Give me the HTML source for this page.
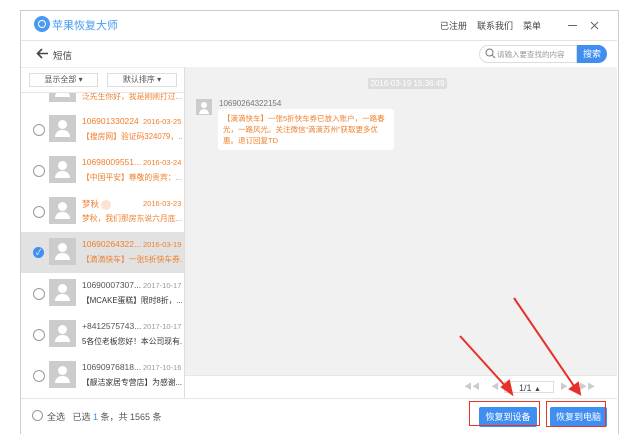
<!DOCTYPE html><html><head><meta charset="utf-8"><style>
body{margin:0;width:644px;height:434px;background:#fff;font-family:"Liberation Sans","Noto Sans CJK SC",sans-serif;position:relative;overflow:hidden}
.a{position:absolute}
.win{left:20px;top:10px;width:597px;height:423px;border:1px solid #ccc;border-bottom:none}
.row{left:21px;width:163px;height:41px}
.av{left:28px;top:6px;width:27px;height:27px;background:#ccc;overflow:hidden}
.av::before{content:"";position:absolute;left:9px;top:5px;width:9px;height:9px;border-radius:50%;background:#fff}
.av::after{content:"";position:absolute;left:6px;top:15px;width:15px;height:7px;border-radius:7px 7px 0 0;background:#fff}
.rd{left:12px;top:15px;width:10px;height:10px;border:1px solid #999;border-radius:50%}
.t1{left:61px;top:7px;font-size:8.5px;color:#555;white-space:nowrap}
.d{left:122px;top:8px;font-size:7.5px;color:#999;white-space:nowrap}
.t2{left:61px;top:22px;font-size:7.8px;color:#333;white-space:nowrap;width:100px;overflow:hidden}
.o{color:#f07f2c!important}
.btn{background:#3f8ef0;color:#fff;font-size:9px;text-align:center;line-height:20px;border-radius:2px}
</style></head><body>
<div class="a win"></div>
<div class="a" style="left:34px;top:16px;width:16px;height:16px;border-radius:50%;background:#4a9af0"></div>
<div class="a" style="left:38px;top:20px;width:6px;height:6px;border:1px solid #fff;border-radius:50%"></div>
<div class="a" style="left:52px;top:17px;font-size:11px;color:#4a9af0">苹果恢复大师</div>
<div class="a" style="left:440px;top:19px;font-size:9px;color:#444">已注册</div>
<div class="a" style="left:477px;top:19px;font-size:9px;color:#444">联系我们</div>
<div class="a" style="left:523px;top:19px;font-size:9px;color:#444">菜单</div>
<div class="a" style="left:568px;top:25px;width:9px;height:1px;background:#666"></div>
<svg class="a" style="left:590px;top:21px" width="9" height="9"><path d="M1 1L8 8M8 1L1 8" stroke="#666" stroke-width="1"/></svg>
<div class="a" style="left:21px;top:40px;width:596px;height:1px;background:#e4e4e4"></div>
<svg class="a" style="left:36px;top:48px" width="13" height="11"><path d="M12 5.5H2M6 1L1.5 5.5L6 10" stroke="#444" stroke-width="1.6" fill="none"/></svg>
<div class="a" style="left:53px;top:48px;font-size:9.5px;color:#444">短信</div>
<div class="a" style="left:479px;top:45px;width:96px;height:16px;border:1px solid #ddd;border-radius:9px 0 0 9px"></div>
<svg class="a" style="left:485px;top:48px" width="11" height="11"><circle cx="4.5" cy="4.5" r="3.5" stroke="#777" fill="none"/><path d="M7 7L10 10" stroke="#777"/></svg>
<div class="a" style="left:497px;top:49px;font-size:7.5px;color:#999">请输入要查找的内容</div>
<div class="a btn" style="left:577px;top:45px;width:30px;height:18px;line-height:18px;border-radius:0 9px 9px 0">搜索</div>
<div class="a" style="left:21px;top:67px;width:596px;height:1px;background:#eee"></div>
<div class="a" style="left:184px;top:67px;width:433px;height:308px;background:#f1f1f1"></div>
<div class="a" style="left:184px;top:67px;width:1px;height:331px;background:#ddd"></div>
<div class="a" style="left:29px;top:73px;width:67px;height:12px;border:1px solid #ddd;font-size:8px;color:#555;text-align:center;line-height:12px">显示全部 ▾</div>
<div class="a" style="left:107px;top:73px;width:68px;height:12px;border:1px solid #ddd;font-size:8px;color:#555;text-align:center;line-height:12px">默认排序 ▾</div>
<div class="a" style="left:21px;top:92px;width:163px;height:1px;background:#e6e6e6"></div>
<div class="a" style="left:21px;top:93px;width:163px;height:305px;overflow:hidden">
 <div class="a row" style="left:0;top:-24px"><div class="a av"></div><div class="a t2 o">泛先生你好，我是刚刚打过...</div></div>
 <div class="a row" style="left:0;top:16px"><div class="a rd"></div><div class="a av"></div><div class="a t1 o">106901330224</div><div class="a d o">2016-03-25</div><div class="a t2 o">【搜房网】验证码324079，...</div></div>
 <div class="a row" style="left:0;top:57px"><div class="a rd"></div><div class="a av"></div><div class="a t1 o">10698009551...</div><div class="a d o">2016-03-24</div><div class="a t2 o">【中国平安】尊敬的贵宾：...</div></div>
 <div class="a row" style="left:0;top:98px"><div class="a rd"></div><div class="a av"></div><div class="a t1 o">梦秋 <span style="display:inline-block;width:10px;height:10px;border-radius:50%;background:#fde3d4;vertical-align:middle"></span></div><div class="a d o">2016-03-23</div><div class="a t2 o">梦秋，我们那房东说六月底...</div></div>
 <div class="a row" style="left:0;top:139px;background:#e2e2e2"><div class="a" style="left:12px;top:15px;width:11px;height:11px;border-radius:50%;background:#3f8ef0;color:#fff;font-size:8px;text-align:center;line-height:11px">✓</div><div class="a av"></div><div class="a t1 o">10690264322...</div><div class="a d o">2016-03-19</div><div class="a t2 o">【滴滴快车】一张5折快车券...</div></div>
 <div class="a row" style="left:0;top:180px"><div class="a rd"></div><div class="a av"></div><div class="a t1">10690007307...</div><div class="a d">2017-10-17</div><div class="a t2">【MCAKE蛋糕】限时8折，...</div></div>
 <div class="a row" style="left:0;top:221px"><div class="a rd"></div><div class="a av"></div><div class="a t1">+8412575743...</div><div class="a d">2017-10-17</div><div class="a t2">5各位老板您好！本公司现有...</div></div>
 <div class="a row" style="left:0;top:262px"><div class="a rd"></div><div class="a av"></div><div class="a t1">10690976818...</div><div class="a d">2017-10-16</div><div class="a t2">【靓洁家居专营店】为感谢...</div></div>
</div>
<div class="a" style="left:368px;top:78px;width:79px;height:11px;background:#ddd;border-radius:2px;font-size:8px;color:#fff;text-align:center;line-height:11px">2016-03-19 15:36:49</div>
<div class="a" style="left:196px;top:99px;width:16px;height:16px;background:#ccc;overflow:hidden"><div class="a" style="left:5px;top:3px;width:6px;height:6px;border-radius:50%;background:#fff"></div><div class="a" style="left:3px;top:10px;width:10px;height:5px;border-radius:5px 5px 0 0;background:#fff"></div></div>
<div class="a" style="left:219px;top:99px;font-size:8px;color:#777">10690264322154</div>
<div class="a" style="left:218px;top:109px;width:166px;height:33px;padding:4px 5px;background:#fff;border-radius:3px;font-size:7.5px;line-height:11px;color:#f07f2c">【滴滴快车】一张5折快车券已放入账户，一路春光，一路风光。关注微信“滴滴苏州”获取更多优惠。退订回复TD</div>
<div class="a" style="left:185px;top:375px;width:432px;height:1px;background:#e6e6e6"></div>
<div class="a" style="left:464px;top:381px;font-size:8px;color:#ccc">◀◀ &nbsp;&nbsp;&nbsp;&nbsp;◀</div>
<div class="a" style="left:504px;top:381px;height:12px;border:1px solid #ddd;font-size:9px;color:#444;line-height:12px;padding-left:14px;box-sizing:border-box;width:50px">1/1 <span style="font-size:7px">▲</span></div>
<div class="a" style="left:560px;top:381px;font-size:8px;color:#ccc">▶ &nbsp;&nbsp;&nbsp;&nbsp;▶▶</div>
<div class="a" style="left:21px;top:398px;width:596px;height:1px;background:#e6e6e6"></div>
<div class="a" style="left:32px;top:410px;width:9px;height:9px;border:1px solid #999;border-radius:50%"></div>
<div class="a" style="left:47px;top:410px;font-size:9px;color:#555">全选 &nbsp; 已选 <span style="color:#3f8ef0">1</span> 条，共 1565 条</div>
<div class="a btn" style="left:479px;top:407px;width:58px;height:20px">恢复到设备</div>
<div class="a btn" style="left:550px;top:407px;width:57px;height:20px">恢复到电脑</div>
<div class="a" style="left:469px;top:401px;width:69px;height:23px;border:1.5px solid #e32"></div>
<div class="a" style="left:546px;top:401px;width:58px;height:24px;border:1.5px solid #e32"></div>
<svg class="a" style="left:0;top:0" width="644" height="434"><g stroke="#e8302a" stroke-width="2" fill="#e8302a"><line x1="460" y1="336" x2="508" y2="389"/><line x1="514" y1="298" x2="576" y2="389"/><polygon points="512,394 502,387 509,381"/><polygon points="580,394 570,389 578,383"/></g></svg>
</body></html>
